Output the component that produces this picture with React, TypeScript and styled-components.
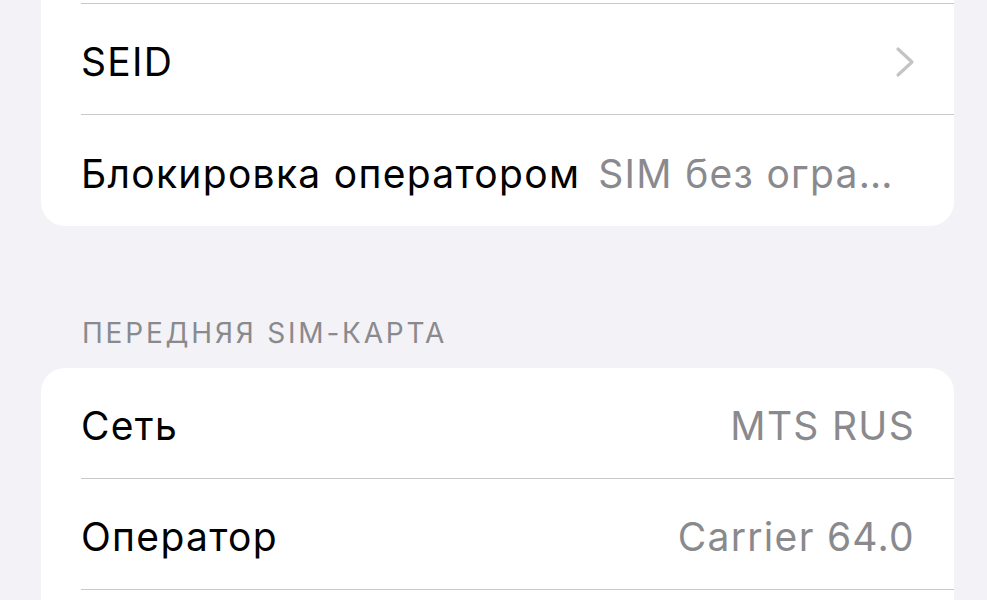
import React from "react";
import styled, { createGlobalStyle } from "styled-components";

const Global = createGlobalStyle`
  html, body { margin: 0; padding: 0; background: #f2f2f7; }
  body { font-family: Inter, "Noto Sans", "Liberation Sans", sans-serif; -webkit-font-smoothing: antialiased; }
  #root { overflow: hidden; height: 600px; }
`;

const Screen = styled.div`
  width: 987px;
  margin-top: -107px;
  padding: 0 33px 0 41px;
  box-sizing: border-box;
  display: flex;
  flex-direction: column;
`;

const Section = styled.section<{ $gap?: number }>`
  display: flex;
  flex-direction: column;
  margin-top: ${(p) => p.$gap ?? 0}px;
`;

const Header = styled.div`
  padding: 0 0 18px 41px;
  font-size: 28px;
  line-height: 34px;
  color: #8a8a8e;
  letter-spacing: 2.8px;
`;

const Card = styled.div`
  background: #ffffff;
  border-radius: 24px;
  overflow: hidden;
  display: flex;
  flex-direction: column;
`;

const Row = styled.div<{ $last?: boolean }>`
  height: 111px;
  margin-left: 40px;
  padding-right: 39px;
  display: flex;
  align-items: center;
  justify-content: space-between;
  gap: 18px;
  box-sizing: border-box;
  border-bottom: ${(p) => (p.$last ? "none" : "1px solid #c8c8cc")};
  padding-top: 5px;
`;

const Label = styled.span`
  font-size: 39px;
  letter-spacing: 1.3px;
  color: #000000;
  white-space: nowrap;
`;

const Value = styled.span`
  font-size: 39px;
  letter-spacing: 1.3px;
  color: #8a8a8e;
  white-space: nowrap;
  overflow: hidden;
  text-overflow: ellipsis;
  min-width: 0;
`;

const Chevron = () => (
  <svg width="20" height="32" viewBox="0 0 20 32" style={{ flexShrink: 0 }}>
    <path d="M3 3 L17 16 L3 29" fill="none" stroke="#c4c4c7" strokeWidth="3.2" strokeLinecap="round" strokeLinejoin="round" />
  </svg>
);

export default function App() {
  return (
    <>
      <Global />
      <Screen>
        <Section>
          <Card>
            <Row>
              <Label>Прошивка модема</Label>
              <Value>1.00.00</Value>
            </Row>
            <Row>
              <Label>SEID</Label>
              <Chevron />
            </Row>
            <Row $last>
              <Label>Блокировка оператором</Label>
              <Value>SIM без ограничений</Value>
            </Row>
          </Card>
        </Section>
        <Section $gap={90}>
          <Header>ПЕРЕДНЯЯ SIM-КАРТА</Header>
          <Card>
            <Row>
              <Label>Сеть</Label>
              <Value>MTS RUS</Value>
            </Row>
            <Row>
              <Label>Оператор</Label>
              <Value>Carrier 64.0</Value>
            </Row>
            <Row $last>
              <Label>IMEI</Label>
              <Value>35 000000 000000 0</Value>
            </Row>
          </Card>
        </Section>
      </Screen>
    </>
  );
}
